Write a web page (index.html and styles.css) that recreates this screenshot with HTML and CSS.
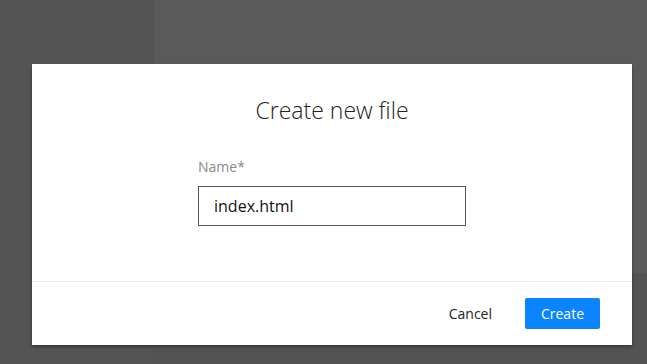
FILE: index.html
```html
<!DOCTYPE html>
<html lang="en">
<head>
  <meta charset="UTF-8">
  <meta name="viewport" content="width=device-width, initial-scale=1.0">
  <title>Create new file</title>
  <link rel="stylesheet" href="styles.css">
</head>
<body>
  <div class="app">
    <div class="sidebar"></div>
    <div class="main">
      <div class="main-top"></div>
      <div class="main-bottom"></div>
    </div>
  </div>

  <!-- Dialogo -->
  <div class="modal">
    <div class="modal-body">
      <h1>Create new file</h1>
      <div class="field">
        <label for="file-name">Name*</label>
        <input type="text" id="file-name" name="file-name" value="index.html">
      </div>
    </div>
    <div class="modal-footer">
      <button type="button" class="btn-cancel">Cancel</button>
      <button type="submit" class="btn-create">Create</button>
    </div>
  </div>
</body>
</html>
```

FILE: styles.css
```css
body {
  font-family: "Open Sans", Arial, sans-serif;
  margin: 0;
  padding: 0;
  height: 100vh;
  overflow: hidden;
}
.app {
  display: flex;
  height: 100%;
}
.sidebar {
  width: 153px;
  background-color: #545454;
  border-right: 1px solid #515151;
}
.main {
  flex: 1;
  display: flex;
  flex-direction: column;
}
.main-top {
  flex: 1;
  background-color: #5a5a5a;
}
.main-bottom {
  height: 91px;
  background-color: #535353;
}
.modal {
  position: absolute;
  top: 64px;
  left: 32px;
  width: 600px;
  background-color: #fff;
  box-shadow: 0 2px 3px rgba(0, 0, 0, 0.35);
}
.modal-body {
  padding: 31px 0 55px;
  display: flex;
  flex-direction: column;
  align-items: center;
}
h1 {
  margin: 0 0 32px;
  font-size: 23px;
  font-weight: 300;
  line-height: 30px;
  color: #222;
}
.field {
  width: 268px;
}
label {
  display: block;
  font-size: 14px;
  line-height: 20px;
  color: #8a8a8a;
  margin-bottom: 9px;
}
input[type="text"] {
  box-sizing: border-box;
  width: 100%;
  height: 40px;
  padding: 0 15px;
  border: 1px solid #555;
  border-radius: 0;
  font-family: inherit;
  font-size: 16px;
  color: #111;
  outline: none;
}
.modal-footer {
  border-top: 1px solid #ececec;
  padding: 16px 32px 16px;
  display: flex;
  justify-content: flex-end;
  align-items: center;
  gap: 17px;
}
button {
  font-family: inherit;
  font-size: 14px;
  height: 31px;
  border: none;
  border-radius: 2px;
  cursor: pointer;
}
.btn-cancel {
  background: none;
  color: #222;
  padding: 0 16px;
}
.btn-create {
  width: 75px;
  background-color: #0a84ff;
  color: #fff;
}
.btn-create:hover {
  background-color: #0077ee;
}
```
